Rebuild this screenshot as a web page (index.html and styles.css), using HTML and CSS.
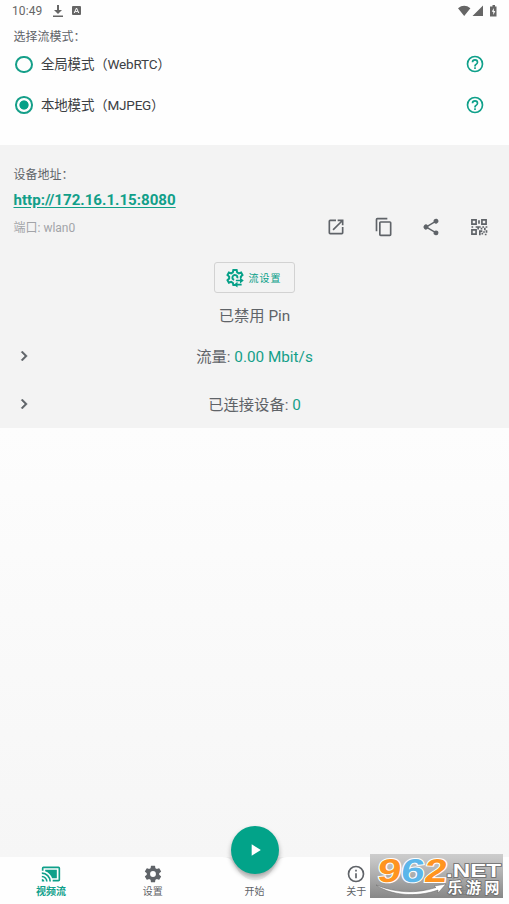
FILE: index.html
```html
<!DOCTYPE html>
<html lang="zh-CN">
<head>
<meta charset="utf-8">
<title>视频流</title>
<link rel="stylesheet" href="styles.css">
</head>
<body>
<div class="screen">
  <header class="status">
    <span class="time">10:49</span>
    <svg class="st-dl" width="10" height="12" viewBox="0 0 10 12"><path d="M4 0h2v5h3L5 9 1 5h3zM0 10.400h10V12H0z"/></svg>
    <svg class="st-a" width="9" height="9" viewBox="0 0 9 9"><rect width="9" height="9" rx="1"/><path d="M2.200 7 4.500 2 6.800 7M3.200 5.600h2.600" fill="none" stroke="#fff"/></svg>
    <svg class="st-right" width="40" height="12" viewBox="0 0 40 12"><path d="M0 3.300Q6.200-1.600 12.400 3.300L6.200 11zM25 0.500V11H14.500zM33 1.500h1.500V0h2.500v1.500h1.500V11.500H32V1.500z"/><path d="m35.800 3-2 3.800h1.500V10l2-4h-1.500z" fill="#fff"/></svg>
  </header>

  <section class="modes">
    <h1 class="caption">选择流模式：</h1>
    <div class="mode">
      <span class="radio"></span><span class="mode-name">全局模式（WebRTC）</span>
      <svg class="help" viewBox="0 0 24 24"><use href="#help"/></svg>
    </div>
    <div class="mode">
      <span class="radio on"></span><span class="mode-name">本地模式（MJPEG）</span>
      <svg class="help" viewBox="0 0 24 24"><use href="#help"/></svg>
    </div>
  </section>

  <section class="details">
    <h2 class="caption">设备地址：</h2>
    <a class="address">http://172.16.1.15:8080</a>
    <div class="port-row">
      <span class="port">端口: wlan0</span>
      <div class="actions">
        <svg viewBox="0 0 24 24"><path d="M19 19H5V5h7V3H5a2 2 0 0 0-2 2v14a2 2 0 0 0 2 2h14a2 2 0 0 0 2-2v-7h-2v7zM14 3v2h3.590l-9.830 9.830 1.410 1.410L19 6.410V10h2V3h-7z"/></svg>
        <svg viewBox="0 0 24 24"><path d="M16 1H4a2 2 0 0 0-2 2v14h2V3h12V1zm3 4H8a2 2 0 0 0-2 2v14a2 2 0 0 0 2 2h11a2 2 0 0 0 2-2V7a2 2 0 0 0-2-2zm0 16H8V7h11v14z"/></svg>
        <svg viewBox="0 0 24 24"><path d="M18 16.080c-.760 0-1.440.300-1.960.770L8.910 12.700a3.300 3.300 0 0 0 0-1.400l7.050-4.110A3 3 0 1 0 15 5c0 .240.040.470.090.700L8.040 9.810a3 3 0 1 0 0 4.380l7.120 4.160a2.920 2.920 0 1 0 2.840-2.270z"/></svg>
        <svg viewBox="0 0 24 24"><path fill-rule="evenodd" d="M2.500 2.500H9.500V9.500H2.500zm2 2v3h3v-3zM14.500 2.500h7v7h-7zm2 2v3h3v-3zM2.500 14.500h7v7h-7zm2 2v3h3v-3zM11 4h2v4h-2zM3 11h2v2H3zM8 11h6v2h-2v2h-2v-2H8zM16 11h2v2h-2zM20 11h2v2h-2zM14 13h2v2h-2zM18 13h2v3h-2zM12 16h4v2h-2v4h-2zM20 16h2v3h-2zM17 17h2v2h-2zM15 19h2v2h-2zM19 20h2v2h-2z"/></svg>
      </div>
    </div>
    <button class="stream-settings">
      <svg viewBox="0 0 24 24"><path d="M13 20.500h-3l-.6-2.700-2-1.100-2.700.900-1.700-3L5 12.700v-2.400L3 8.500l1.700-3 2.700.900 2-1.100L10 2.500h4l.6 2.800 2 1.100 2.700-.9 1.700 3-2 1.800v2" fill="none" stroke="currentColor" stroke-width="2.400"/><path d="M14.800 12.200A3 3 0 1 0 11 14.300" fill="none" stroke="currentColor" stroke-width="2.200"/><path d="m18 11.500 4.500 3.500L18 18.500V16h-5v-2h5zM15 16.500v2.500h5v2h-5v2.500L10.500 20z"/></svg>
      流设置
    </button>
    <p class="pin">已禁用 Pin</p>
    <div class="stat"><svg viewBox="0 0 24 24"><use href="#chevron"/></svg><p>流量: <b>0.00 Mbit/s</b></p></div>
    <div class="stat"><svg viewBox="0 0 24 24"><use href="#chevron"/></svg><p>已连接设备: <b>0</b></p></div>
  </section>

  <main class="blank"></main>

  <nav class="nav">
    <svg class="notch" width="80" height="26" viewBox="0 0 80 26"><path d="M7 0C17 0 17 5 22 12 31 27 49 27 58 12 63 5 63 0 73 0z"/></svg>
    <div class="tab active">
      <svg viewBox="0 0 24 24"><path d="M5 7v1.630c3.960 1.280 7.090 4.410 8.370 8.370H19V7H5zM21 3H3a2 2 0 0 0-2 2v3h2V5h18v14h-7v2h7a2 2 0 0 0 2-2V5a2 2 0 0 0-2-2zM1 18v3h3a3 3 0 0 0-3-3zm0-4v2a5 5 0 0 1 5 5h2a7 7 0 0 0-7-7zm0-4v2a9 9 0 0 1 9 9h2A11 11 0 0 0 1 10z"/></svg>
      <span>视频流</span>
    </div>
    <div class="tab">
      <svg viewBox="0 0 24 24"><path d="M19.430 12.980a8 8 0 0 0 0-1.960l2.110-1.650a.5.5 0 0 0 .120-.640l-2-3.460a.5.5 0 0 0-.610-.220l-2.490 1a7.300 7.300 0 0 0-1.690-.980l-.380-2.650A.49.49 0 0 0 14 2h-4a.49.49 0 0 0-.490.420l-.380 2.650c-.610.250-1.170.590-1.690.980l-2.490-1a.49.49 0 0 0-.610.220l-2 3.460a.49.49 0 0 0 .120.640l2.110 1.650a8 8 0 0 0 0 1.960l-2.110 1.650a.5.5 0 0 0-.120.640l2 3.460c.120.220.390.300.610.220l2.490-1c.520.400 1.080.730 1.690.980l.380 2.650c.030.240.240.420.490.420h4c.250 0 .460-.180.490-.420l.380-2.650c.610-.250 1.170-.590 1.690-.980l2.490 1c.230.090.490 0 .610-.220l2-3.460a.5.5 0 0 0-.120-.640zM12 15.500a3.500 3.500 0 1 1 0-7 3.500 3.500 0 0 1 0 7z"/></svg>
      <span>设置</span>
    </div>
    <div class="tab">
      <i class="gap"></i>
      <span>开始</span>
    </div>
    <div class="tab">
      <svg viewBox="0 0 24 24"><path d="M11 7h2v2h-2zm0 4h2v6h-2zm1-9a10 10 0 1 0 0 20 10 10 0 0 0 0-20zm0 18a8 8 0 1 1 0-16 8 8 0 0 1 0 16z"/></svg>
      <span>关于</span>
    </div>
    <div class="tab">
      <svg viewBox="0 0 24 24"><path d="M6.400 5 5 6.400 10.600 12 5 17.600 6.400 19l5.600-5.600 5.600 5.600 1.400-1.400-5.600-5.600L19 6.400 17.600 5 12 10.600z"/></svg>
      <span>退出</span>
    </div>
    <div class="fab"><svg viewBox="0 0 24 24"><path d="M8 5v14l11-7z"/></svg></div>
  </nav>

  <svg class="brand" width="133" height="44" viewBox="0 0 133 44">
    <defs><linearGradient id="plate" x1="0" y1="0" x2="0" y2="1"><stop offset="0" stop-color="#c6c6c6" stop-opacity=".85"/><stop offset="1" stop-color="#7a7a7a" stop-opacity=".9"/></linearGradient></defs>
    <rect width="133" height="44" fill="url(#plate)"/>
    <path d="M6 31C20 41 46 44 68 36l0 3 8-9-12 2 2 1.500C46 40 26 39 6 31z" fill="#fff" stroke="#666" stroke-width=".5"/>
    <g class="digits" transform="translate(3 0) skewX(-7)">
      <text x="7" y="27.500" textLength="23.500" lengthAdjust="spacingAndGlyphs" fill="#ff9420">9</text>
      <text x="30.500" y="27.500" textLength="23.500" lengthAdjust="spacingAndGlyphs" fill="#5bb6ea">6</text>
      <text x="54" y="27.500" textLength="22.500" lengthAdjust="spacingAndGlyphs" fill="#ff9420">2</text>
    </g>
    <text class="net" x="76" y="22.500" textLength="55" lengthAdjust="spacingAndGlyphs">.NET</text>
    <text class="site" x="77.500" y="39" textLength="52">乐游网</text>
  </svg>
</div>

<svg width="0" height="0" class="defs">
  <symbol id="help" viewBox="0 0 24 24"><path d="M11 18h2v-2h-2v2zm1-16a10 10 0 1 0 0 20 10 10 0 0 0 0-20zm0 18a8 8 0 1 1 0-16 8 8 0 0 1 0 16zm0-14a4 4 0 0 0-4 4h2a2 2 0 1 1 4 0c0 2-3 1.750-3 5h2c0-2.250 3-2.500 3-5a4 4 0 0 0-4-4z"/></symbol>
  <symbol id="chevron" viewBox="0 0 24 24"><path d="M10 6 8.590 7.410 13.170 12l-4.580 4.590L10 18l6-6z" stroke="currentColor" stroke-width=".5"/></symbol>
</svg>
</body>
</html>
```
FILE: styles.css
```css
* { box-sizing: border-box; margin: 0; padding: 0; }
body { font-family: Roboto, "Noto Sans CJK SC", sans-serif; color: #5f6368; }
svg { fill: currentColor; display: block; flex: none; }
.defs { position: absolute; }
.screen {
  position: relative;
  width: 509px;
  height: 904px;
  overflow: hidden;
  display: flex;
  flex-direction: column;
  background: #fefefe;
}
.status { height: 22px; display: flex; align-items: center; padding: 0 13px 1px 12px; color: #666; }
.time { font-size: 12px; letter-spacing: .1px; line-height: 20px; width: 41px; }
.st-a { margin-left: 9px; }
.st-right { margin-left: auto; margin-right: -2px; }

.modes { height: 123px; }
.caption { font-size: 12px; font-weight: 400; line-height: 18px; padding-left: 13.5px; }
.modes .caption { padding-top: 6px; height: 22px; }
.mode { display: flex; align-items: center; height: 40.5px; padding: 0 24px 0 15px; color: #3c4043; }
.radio { width: 17.500px; height: 17.500px; border: 2px solid #159f89; border-radius: 50%; }
.radio.on { background: radial-gradient(circle, #06a088 4.200px, transparent 5px); }
.mode-name { font-size: 13.500px; letter-spacing: -.2px; margin: -2px 0 0 8.500px; flex: 1; white-space: nowrap; }
.help { width: 20px; height: 20px; color: #0fa08a; }

.details { height: 283px; padding-top: 21px; background: #f3f3f3; display: flex; flex-direction: column; }
.address { font-size: 15.100px; font-weight: 700; line-height: 20px; margin: 6px 0 0 13.500px; color: #119f89; text-decoration: underline; text-underline-offset: 2px; align-self: flex-start; }
.port-row { display: flex; justify-content: space-between; align-items: center; height: 33px; padding: 0 20.500px 0 13.500px; }
.port { font-size: 12px; color: #a2a4a8; }
.actions { display: flex; gap: 27.500px; }
.actions svg { width: 20px; height: 20px; }
.stream-settings {
  align-self: center; width: 81px; height: 31px; margin-top: 19px;
  display: flex; align-items: center; justify-content: center; gap: 4px;
  border: 1px solid #d2d2d2; border-radius: 3px; background: none;
  font: 400 10px Roboto, "Noto Sans CJK SC", sans-serif; letter-spacing: 1px; color: #06a088;
}
.stream-settings svg { width: 20px; height: 20px; margin-left: -3px; }
.pin { font-size: 15.300px; line-height: 22px; text-align: center; margin-top: 12px; }
.stat { display: grid; grid-template-columns: 48px 1fr 48px; align-items: center; height: 48px; font-size: 15.300px; text-align: center; }
.stat p { line-height: 22px; margin-top: 1px; }
.stat svg { width: 20px; height: 20px; margin-left: 14px; }
.stat b { font-weight: 400; color: #159f89; }
.pin + .stat { margin-top: 5px; }

.blank { flex: 1; background: linear-gradient(#fdfdfd, #f6f6f6); }

.nav { position: relative; height: 47px; display: grid; grid-template-columns: repeat(5, 1fr); background: #fefefe; }
.tab { display: flex; flex-direction: column; align-items: center; padding-top: 7px; font-size: 10px; }
.tab svg, .gap { width: 20px; height: 20px; }
.tab span { line-height: 16px; }
.tab.active { color: #0fa08a; font-weight: 700; }
.notch { position: absolute; left: 214.500px; top: 0; fill: #efefef; }
.fab {
  position: absolute; left: 230.500px; top: -31px; width: 48px; height: 48px; border-radius: 50%;
  background: #02a389; color: #fff; display: grid; place-items: center;
  box-shadow: 0 3px 5px rgba(0, 0, 0, .32);
}
.fab svg { width: 20px; height: 20px; }

.brand { position: absolute; left: 370px; top: 854px; }
.digits { font: 700 33px "Liberation Sans", sans-serif; stroke: #fff; stroke-width: 2px; paint-order: stroke; }
.net, .site { fill: #fff; stroke: #6a6a6a; stroke-width: 1.500px; paint-order: stroke; }
.net { font: 700 18.500px "Liberation Sans", sans-serif; }
.site { font: 700 15px "Noto Sans CJK SC", sans-serif; }
```
